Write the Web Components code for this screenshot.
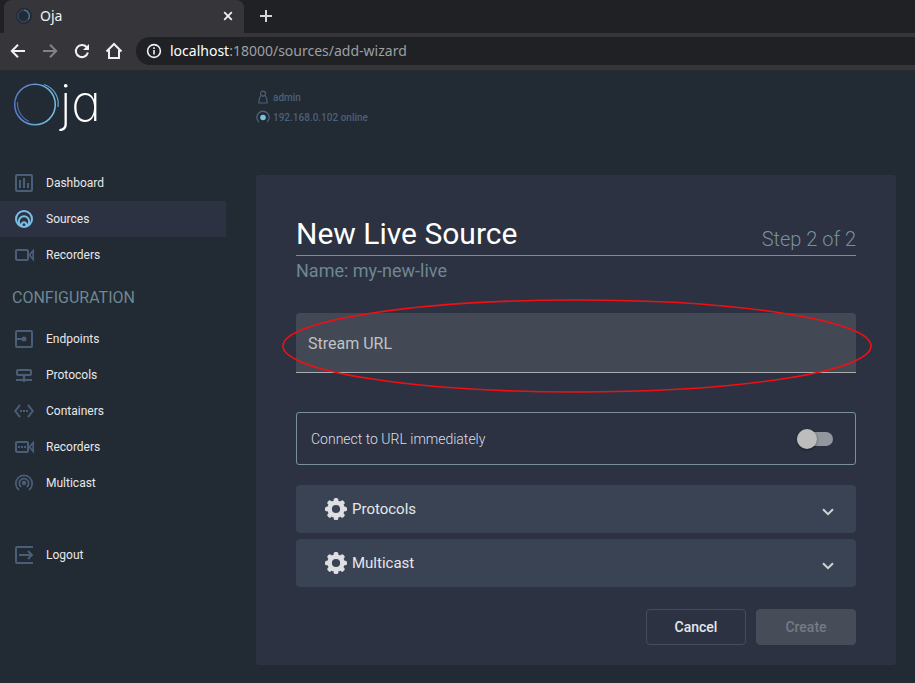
<!DOCTYPE html>
<html lang="en">
<head>
<meta charset="utf-8">
<meta name="viewport" content="width=device-width, initial-scale=1">
<title>Oja</title>
<style>
  body {
    margin: 0;
    min-height: 100vh;
    background: #222a33;
    color: #e0e2e6;
    font-family: Roboto, "Liberation Sans", sans-serif;
    --card: #2c3242;
    --line: #78909c;
    --icon: #4b5e77;
    --accent: #7ac0e4;
  }
</style>
</head>
<body>
<browser-bar></browser-bar>
<app-shell>
  <side-bar slot="side"></side-bar>
  <user-status slot="status"></user-status>
  <wizard-card heading="New Live Source" step="Step 2 of 2" sub="Name: my-new-live">
    <stream-field label="Stream URL"></stream-field>
    <toggle-row label="Connect to URL immediately"></toggle-row>
    <option-panel label="Protocols"></option-panel>
    <option-panel label="Multicast"></option-panel>
    <action-button slot="actions">Cancel</action-button>
    <action-button slot="actions" disabled>Create</action-button>
  </wizard-card>
</app-shell>

<script>
const define = (name, render) => {
  customElements.define(name, class extends HTMLElement {
    constructor() {
      super();
      this.attachShadow({ mode: "open" });
    }
    connectedCallback() {
      this.shadowRoot.innerHTML =
        `<style>:host, *, *::before, *::after { box-sizing: border-box; } svg { display: block; flex: none; }</style>` + render(this);
    }
  });
};

define("browser-bar", () => `
  <style>
    :host { display: block; background: #202124; font-family: "Noto Sans", "Open Sans", sans-serif; }
    .tabs { display: flex; height: 33px; padding-left: 4px; }
    .tab { display: flex; align-items: center; gap: 8px; width: 240px; padding: 0 10px 2px 12px; background: #36363a; border-radius: 8px 8px 0 0; font-size: 14px; color: #f1f1f3; }
    .tab span { flex: 1; }
    button { display: grid; place-items: center; border: 0; padding: 0; background: none; color: #f1f1f3; width: 20px; height: 20px; }
    .tab button { width: 12px; }
    .new { margin: 6px 12px; color: #d4d5d8; }
    .tools { display: flex; align-items: center; gap: 12px; height: 37px; padding: 0 0 2px 8px; background: #36363a; }
    .dim { color: #818286; }
    .address { flex: 1; display: flex; align-items: center; gap: 8px; height: 28px; padding-left: 10px; border-radius: 14px 0 0 14px; background: #202124; font-size: 14px; color: #9aa0a6; white-space: nowrap; }
    .address b { font-weight: 400; color: #fff; }
    .edge { height: 1px; background: #2a2b2e; }
  </style>
  <div class="tabs">
    <div class="tab">
      <svg width="16" height="16" viewBox="0 0 16 16" fill="none"><circle cx="8" cy="8" r="8" fill="#222a36"/><circle cx="7.6" cy="8" r="5.8" stroke="#39566f" stroke-width="1"/><path d="M8 2.2a5.8 5.8 0 0 1 4 9.5" stroke="#4b7893" stroke-width="1.2"/></svg>
      <span>Oja</span>
      <button aria-label="Close tab"><svg width="10" height="10" viewBox="0 0 10 10" stroke="currentColor" stroke-width="1.8"><path d="M1.2 1.2l7.6 7.6M8.8 1.2L1.2 8.8"/></svg></button>
    </div>
    <button class="new" aria-label="New tab"><svg width="12" height="12" viewBox="0 0 12 12" stroke="currentColor" stroke-width="2"><path d="M6 0v12M0 6h12"/></svg></button>
  </div>
  <div class="tools">
    <button aria-label="Back"><svg width="16" height="16" viewBox="0 0 16 16" fill="none" stroke="currentColor" stroke-width="2"><path d="M15 8H2.5M8 1.8L1.8 8 8 14.2"/></svg></button>
    <button class="dim" aria-label="Forward"><svg width="16" height="16" viewBox="0 0 16 16" fill="none" stroke="currentColor" stroke-width="2"><path d="M1 8h12.500M8 1.8L14.200 8 8 14.200"/></svg></button>
    <button aria-label="Reload"><svg width="16" height="16" viewBox="0 0 16 16" fill="none" stroke="currentColor" stroke-width="2"><path d="M13.900 9.500A6.100 6.100 0 1 1 12.600 4"/><path d="M15 1v6H9z" fill="currentColor" stroke="none"/></svg></button>
    <button aria-label="Home"><svg width="18" height="18" viewBox="0 0 18 18" fill="none" stroke="currentColor" stroke-width="2"><path d="M1.500 9.500L9 2l7.500 7.500M4 8v8h10V8"/></svg></button>
    <div class="address">
      <svg width="16" height="16" viewBox="0 0 16 16" fill="none" stroke="#f1f1f3" stroke-width="1.600"><circle cx="8" cy="8" r="6.400"/><path d="M8 7v4.500M8 4.200v1.700"/></svg>
      <div><b>localhost</b>:18000/sources/add-wizard</div>
    </div>
  </div>
  <div class="edge"></div>`);

define("app-shell", () => `
  <style>
    :host { display: grid; grid-template-columns: 226px minmax(0, 1fr); column-gap: 30px; padding-right: 19px; }
    main { padding-bottom: 18px; }
  </style>
  <slot name="side"></slot>
  <main><slot name="status"></slot><slot></slot></main>`);

define("oja-logo", () => `
  <style>
    :host { display: flex; gap: 2px; height: 94px; padding: 8px 12px 0; }
    svg { margin-top: 2px; }
    span { font: 200 50px/48px Inter, Lato, sans-serif; font-optical-sizing: none; font-variation-settings: "opsz" 14, "wght" 100; font-feature-settings: "cv11"; color: #fff; }
  </style>
  <svg width="46" height="46" viewBox="0 0 46 46" fill="none" aria-label="O" role="img" overflow="visible">
    <defs>
      <linearGradient id="ring" x1="0" y1="0.300" x2="1" y2="0.500"><stop offset="0" stop-color="#5577c8"/><stop offset="1" stop-color="#76c1e2"/></linearGradient>
    </defs>
    <circle cx="23" cy="23.500" r="20.300" stroke="url(#ring)" stroke-width="1.500"/>
    <path d="M32 3.500a20.300 20.300 0 0 1 14 22.500" stroke="#62a9cc" stroke-width="1.200"/>
    <path d="M5.500 21a20.300 20.300 0 0 0 11.500 19.500" stroke="#4a6cae" stroke-width="1.200"/>
  </svg>
  <span>ja</span>`);

const icons = {
  dashboard: `<rect x="4" y="4" width="16" height="16" rx="1"/><path d="M8 9v8M12 7v10M16 12v5"/>`,
  sources: `<circle cx="12" cy="12" r="8"/><path d="M8.500 18.300a5.200 5.200 0 1 1 7 0M10.400 19.500a2.400 2.400 0 1 1 3.200 0"/>`,
  recorder: `<rect x="4" y="7" width="12" height="10" rx="1"/><path stroke-width="1.700" d="M21.200 7.500v9L17.500 12z"/>`,
  endpoints: `<rect x="4" y="4" width="16" height="16" rx="1"/><path d="M4 12h8"/><circle cx="12" cy="12" r="2.500" fill="currentColor" stroke="none"/>`,
  protocols: `<rect x="5" y="7" width="14" height="5" rx="1"/><path d="M12 12v5M4 17h16"/><circle cx="12" cy="17" r="2" fill="currentColor" stroke="none"/>`,
  containers: `<path d="M8 5.800L3.300 12 8 18.200M16 5.800l4.700 6.200-4.700 6.200"/><path d="M8 12h2M11 12h2M14 12h2"/>`,
  recorderset: `<rect x="4" y="7" width="12" height="10" rx="1"/><path stroke-width="1.700" d="M21.200 7.500v9L17.500 12z"/><path d="M6 12h2M9 12h2M12 12h2"/>`,
  multicast: `<path stroke-width="1.700" d="M7 19a8.200 8.200 0 1 1 10 0M9.200 16a4.700 4.700 0 1 1 5.600 0"/><circle cx="12" cy="12" r="2.200" fill="currentColor" stroke="none"/>`,
  logout: `<path d="M21 4H5a1 1 0 0 0-1 1v14a1 1 0 0 0 1 1h16M7 12h12M16 8l4 4-4 4"/>`
};

define("nav-item", el => `
  <style>
    :host { display: block; }
    a { display: flex; align-items: center; gap: 10px; height: 36px; padding-left: 12px; color: #e6e8ea; font-size: 12px; text-decoration: none; }
    svg { color: var(--icon); }
    :host([active]) a { background: var(--card); }
    :host([active]) svg { color: var(--accent); }
  </style>
  <a href="#${el.getAttribute("icon")}"><svg width="24" height="24" viewBox="0 0 24 24" fill="none" stroke="currentColor" stroke-width="2">${icons[el.getAttribute("icon")]}</svg><slot></slot></a>`);

define("side-bar", () => `
  <style>
    :host { display: block; }
    h2 { margin: 0; padding: 2px 0 0 12px; font-weight: 400; font-size: 16px; line-height: 46px; color: #6d8793; }
    nav nav-item:last-child { margin-top: 36px; }
  </style>
  <oja-logo></oja-logo>
  <nav>
    <nav-item icon="dashboard">Dashboard</nav-item>
    <nav-item icon="sources" active>Sources</nav-item>
    <nav-item icon="recorder">Recorders</nav-item>
    <h2>CONFIGURATION</h2>
    <nav-item icon="endpoints">Endpoints</nav-item>
    <nav-item icon="protocols">Protocols</nav-item>
    <nav-item icon="containers">Containers</nav-item>
    <nav-item icon="recorderset">Recorders</nav-item>
    <nav-item icon="multicast">Multicast</nav-item>
    <nav-item icon="logout">Logout</nav-item>
  </nav>`);

define("user-status", () => `
  <style>
    :host { display: block; height: 104px; padding-top: 16px; color: #4d6079; font-size: 10px; font-weight: 500; }
    div { display: flex; align-items: center; gap: 3px; height: 20px; }
  </style>
  <div><svg width="14" height="14" viewBox="0 0 14 14" fill="none" stroke="currentColor" stroke-width="1.200"><circle cx="7" cy="3.600" r="2.500"/><path d="M5 5.600C3.500 7 2.900 9 2.900 13h8.200c0-4-.6-6-2.100-7.400"/></svg>admin</div>
  <div><svg width="14" height="14" viewBox="0 0 14 14" fill="none" stroke="currentColor" stroke-width="1.300"><path d="M3 12.200a6.200 6.200 0 1 1 8 0"/><circle cx="7" cy="7.500" r="2.800" fill="#7ac0e4" stroke="none"/></svg>192.168.0.102 online</div>`);

define("wizard-card", el => `
  <style>
    :host { display: block; padding: 40px 40px 20px; border-radius: 3px; background: var(--card); }
    header { display: flex; align-items: flex-end; justify-content: space-between; border-bottom: 1px solid var(--line); }
    h1 { margin: 0; padding-bottom: 2px; font-weight: 400; font-size: 30px; line-height: 38px; color: #fff; }
    header span { font-weight: 300; font-size: 20px; line-height: 32px; color: var(--line); }
    p { margin: 0 0 27px; font-size: 18px; line-height: 30px; color: #6f8793; }
    footer { display: flex; justify-content: flex-end; gap: 10px; margin-top: 22px; }
  </style>
  <header><h1>${el.getAttribute("heading")}</h1><span>${el.getAttribute("step")}</span></header>
  <p>${el.getAttribute("sub")}</p>
  <slot></slot>
  <footer><slot name="actions"></slot></footer>`);

define("stream-field", el => `
  <style>
    :host { display: grid; position: relative; margin-bottom: 39px; }
    label, input { grid-area: 1 / 1; }
    label { align-self: center; padding-left: 12px; font-size: 16px; color: #c0c2c5; pointer-events: none; z-index: 1; }
    input { width: 100%; height: 60px; padding: 20px 12px 4px; border: 0; border-bottom: 1px solid #a9adb2; border-radius: 4px 4px 0 0; background: #424954; color: #fff; font: inherit; outline: 0; }
    .mark { position: absolute; z-index: 2; inset: -13px -15px -19px -13px; pointer-events: none; }
    .mark svg { width: 100%; height: 100%; overflow: visible; }
  </style>
  <label for="url">${el.getAttribute("label")}</label>
  <input id="url" type="text">
  <div class="mark"><svg aria-hidden="true"><ellipse cx="50%" cy="50%" rx="50%" ry="50%" fill="none" stroke="#f01014" stroke-width="1.600"/></svg></div>`);

define("toggle-row", el => `
  <style>
    :host { display: block; margin-bottom: 20px; }
    label { display: flex; align-items: center; justify-content: space-between; height: 53px; padding: 0 22px 0 14px; border: 1px solid var(--line); border-radius: 3px; font-size: 14px; font-weight: 300; color: #dcdee2; }
    input { appearance: none; display: grid; align-items: center; width: 36px; height: 20px; margin: 0; }
    input::before, input::after { content: ""; grid-area: 1 / 1; }
    input::before { width: 36px; height: 14px; border-radius: 7px; background: #92969f; }
    input::after { width: 20px; height: 20px; border-radius: 50%; background: #bdbdbd; box-shadow: 0 1px 3px #0006; }
    input:checked::after { justify-self: end; }
  </style>
  <label>${el.getAttribute("label")}<input type="checkbox" role="switch"></label>`);

define("option-panel", el => {
  const teeth = [0, 45, 90, 135, 180, 225, 270, 315]
    .map(a => `<rect x="9.700" y="1" width="4.600" height="5" rx="1.600" transform="rotate(${a} 12 12)"/>`).join("");
  return `
  <style>
    :host { display: block; }
    :host(:not(:last-of-type)) { margin-bottom: 6px; }
    button { display: flex; align-items: center; gap: 4px; width: 100%; height: 48px; padding: 0 16px 0 28px; border: 0; border-radius: 4px; background: #3a4354; color: #e6e7ea; font: 400 15px Roboto, sans-serif; text-align: left; }
    span { flex: 1; }
  </style>
  <button aria-expanded="false">
    <svg width="24" height="24" viewBox="0 0 24 24" fill="#dddfe2">${teeth}<circle cx="12" cy="12" r="6.400" fill="none" stroke="#dddfe2" stroke-width="4.600"/></svg>
    <span>${el.getAttribute("label")}</span>
    <svg width="24" height="24" viewBox="0 0 24 24" fill="none" stroke="#d0d2d6" stroke-width="2"><path d="M7 12.200l5 5 5-5"/></svg>
  </button>`;
});

define("action-button", el => `
  <style>
    :host { display: block; }
    button { width: 100px; height: 36px; padding: 0; border: 1px solid #464d58; border-radius: 4px; background: none; color: #e6e7ea; font: 500 14px Roboto, sans-serif; }
    button:disabled { background: #464d58; color: #757b84; }
  </style>
  <button type="button" ${el.hasAttribute("disabled") ? "disabled" : ""}><slot></slot></button>`);
</script>
</body>
</html>
